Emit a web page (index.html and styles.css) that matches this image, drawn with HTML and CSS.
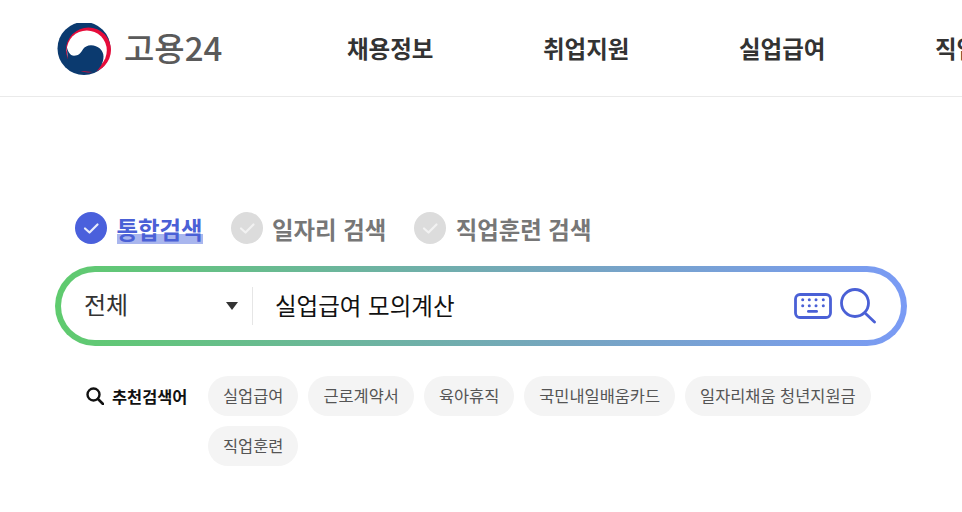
FILE: index.html
```html
<!DOCTYPE html>
<html lang="ko">
<head>
<meta charset="utf-8">
<title>고용24</title>
<link rel="stylesheet" href="styles.css">
</head>
<body>
<header class="header">
  <a class="logo">
    <svg class="logo-mark" viewBox="0 0 54 52" width="54" height="52">
      <circle cx="27" cy="25.500" r="26.500" fill="#0b3a6f"/>
      <circle cx="31.500" cy="27" r="22.500" fill="#e60c3a"/>
      <circle cx="29.800" cy="27.500" r="20" fill="#fff"/>
      <path fill="#0b3a6f" d="M9.500 22.500C10.500 28 13 32.700 17 32.700 21.500 32.700 24 29.800 25.500 27 27.500 23.800 30.500 22.300 34 22.300 41 22.300 46.500 27.500 46.500 33.500 46.500 40 43 45.500 38 49.300L12 47z"/>
    </svg>
    <span class="logo-text">고용24</span>
  </a>
  <nav class="nav">
    <a class="nav-item">채용정보</a>
    <a class="nav-item">취업지원</a>
    <a class="nav-item">실업급여</a>
    <a class="nav-item">직업능력개발</a>
  </nav>
</header>
<main class="main">
  <div class="tabs">
    <div class="tab tab-on">
      <svg class="check" viewBox="0 0 32 32" width="32" height="32"><circle cx="16" cy="16" r="16" fill="#4a60dc"/><path d="M10 16.500l4.500 4 8-8" fill="none" stroke="#e8ecfb" stroke-width="2.200" stroke-linecap="round" stroke-linejoin="round"/></svg>
      <span class="tab-label">통합검색</span>
    </div>
    <div class="tab">
      <svg class="check" viewBox="0 0 32 32" width="32" height="32"><circle cx="16" cy="16" r="16" fill="#dcdcdc"/><path d="M10 16.500l4.500 4 8-8" fill="none" stroke="#f2f2f2" stroke-width="2.200" stroke-linecap="round" stroke-linejoin="round"/></svg>
      <span class="tab-label">일자리 검색</span>
    </div>
    <div class="tab">
      <svg class="check" viewBox="0 0 32 32" width="32" height="32"><circle cx="16" cy="16" r="16" fill="#dcdcdc"/><path d="M10 16.500l4.500 4 8-8" fill="none" stroke="#f2f2f2" stroke-width="2.200" stroke-linecap="round" stroke-linejoin="round"/></svg>
      <span class="tab-label">직업훈련 검색</span>
    </div>
  </div>
  <div class="search">
    <div class="search-inner">
      <div class="select">
        <span class="select-text">전체</span>
        <span class="caret"></span>
      </div>
      <div class="query">실업급여 모의계산</div>
      <svg class="kbd" viewBox="0 0 38 26" width="38" height="26">
        <rect x="1.500" y="1.500" width="35" height="23" rx="4.500" fill="none" stroke="#4a60d6" stroke-width="2.800"/>
        <g fill="#4a60d6"><circle cx="8.700" cy="6.800" r="1.500"/><circle cx="15.300" cy="6.800" r="1.500"/><circle cx="22" cy="6.800" r="1.500"/><circle cx="29.300" cy="6.800" r="1.500"/><circle cx="8.700" cy="12.800" r="1.500"/><circle cx="15.300" cy="12.800" r="1.500"/><circle cx="22" cy="12.800" r="1.500"/><circle cx="29.300" cy="12.800" r="1.500"/><rect x="13" y="17" width="11" height="2.800" rx="1.400"/></g>
      </svg>
      <svg class="glass" viewBox="0 0 36 36" width="36" height="36">
        <circle cx="15" cy="15" r="13.500" fill="none" stroke="#4a60d6" stroke-width="2.800"/>
        <path d="M25 25l9.500 9" fill="none" stroke="#4a60d6" stroke-width="2.800" stroke-linecap="round"/>
      </svg>
    </div>
  </div>
  <div class="rec">
    <div class="rec-title">
      <svg viewBox="0 0 18 18" width="18" height="18"><circle cx="7.500" cy="7.500" r="6" fill="none" stroke="#111" stroke-width="2.400"/><path d="M12 12l5 5" stroke="#111" stroke-width="2.600" stroke-linecap="round"/></svg>
      <span>추천검색어</span>
    </div>
    <div class="chips">
      <a class="chip">실업급여</a>
      <a class="chip">근로계약서</a>
      <a class="chip">육아휴직</a>
      <a class="chip">국민내일배움카드</a>
      <a class="chip">일자리채움 청년지원금</a>
      <a class="chip">직업훈련</a>
    </div>
  </div>
</main>
</body>
</html>
```
FILE: styles.css
```css
* { box-sizing: border-box; }
html, body { margin: 0; padding: 0; }
body {
  width: 962px;
  height: 512px;
  overflow: hidden;
  background: #fff;
  font-family: "Noto Sans CJK KR", "Noto Sans", sans-serif;
  color: #222;
}
.header {
  display: flex;
  align-items: center;
  height: 97px;
  padding-left: 57px;
  padding-bottom: 1px;
  border-bottom: 1px solid #eaeaea;
  white-space: nowrap;
  overflow: hidden;
}
.logo {
  display: flex;
  align-items: center;
  gap: 13px;
  width: 290px;
  flex: none;
}
.logo-mark { flex: none; margin-top: 3px; }
.logo-text {
  font-size: 33px;
  font-weight: 500;
  color: #5a5a5a;
  letter-spacing: 0;
  line-height: 1;
}
.nav { display: flex; gap: 110px; }
.nav-item {
  width: 86px;
  font-size: 23.500px;
  font-weight: 700;
  color: #333;
}
.main { padding: 114px 55px 0; }
.tabs {
  display: flex;
  gap: 28px;
  padding-left: 20px;
  height: 36px;
  align-items: center;
}
.tab {
  display: flex;
  align-items: center;
  gap: 9.500px;
}
.check { flex: none; margin-top: -3px; }
.tab-label {
  font-size: 23.400px;
  font-weight: 700;
  color: #777;
  line-height: 30px;
}
.tab-on .tab-label {
  color: #4a60d6;
  background: linear-gradient(to bottom, transparent 68%, #a9b6ee 68%);
}
.search {
  margin-top: 19px;
  width: 852px;
  height: 80px;
  padding: 6px;
  border-radius: 40px;
  background: linear-gradient(90deg, #5fcb6e 0%, #76a5c0 60%, #7a9bf5 100%);
}
.search-inner {
  display: flex;
  align-items: center;
  height: 68px;
  background: #fff;
  border-radius: 34px;
  padding-left: 24px;
  padding-right: 25px;
}
.select {
  display: flex;
  align-items: center;
  justify-content: space-between;
  width: 168px;
  height: 38px;
  padding-right: 14px;
  border-right: 1px solid #e6e6e6;
  flex: none;
}
.select-text { font-size: 24px; font-weight: 400; color: #333; margin-top: -5px; margin-left: -1px; }
.caret {
  width: 0;
  height: 0;
  border-left: 6px solid transparent;
  border-right: 6px solid transparent;
  border-top: 8px solid #333;
}
.query {
  flex: 1;
  padding-left: 22px;
  padding-bottom: 2px;
  font-size: 23.500px;
  color: #111;
}
.kbd { flex: none; margin-right: 8px; }
.glass { flex: none; }
.rec {
  display: flex;
  margin-top: 30px;
  padding-left: 31px;
}
.rec-title {
  display: flex;
  align-items: center;
  gap: 8px;
  height: 40px;
  width: 122px;
  flex: none;
  font-size: 16.400px;
  font-weight: 700;
  color: #111;
}
.chips {
  display: flex;
  flex-wrap: wrap;
  gap: 10px;
  width: 680px;
}
.chip {
  height: 40px;
  line-height: 38px;
  padding: 0 15px;
  border-radius: 20px;
  background: #f4f4f4;
  font-size: 16.420px;
  color: #555;
}
```
